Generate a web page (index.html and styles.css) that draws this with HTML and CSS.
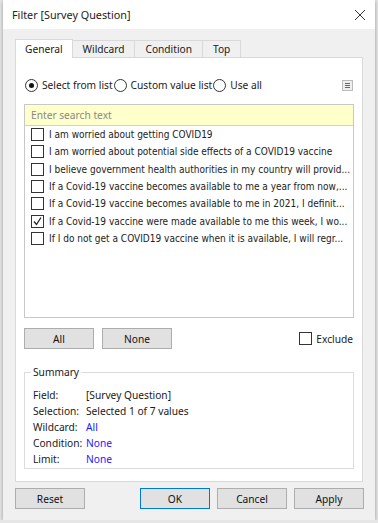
FILE: index.html
```html
<!DOCTYPE html>
<html lang="en">
<head>
  <meta charset="UTF-8">
  <title>Filter [Survey Question]</title>
  <link rel="stylesheet" href="styles.css">
</head>
<body>
  <div class="dialog">
    <div class="title-bar">
      <span class="title">Filter [Survey Question]</span>
      <svg class="close" width="12" height="12" viewBox="0 0 12 12"><path d="M1 1 L11 11 M11 1 L1 11" stroke="#333" stroke-width="1"/></svg>
    </div>
    <div class="body">
      <div class="tabs">
        <div class="tab active">General</div>
        <div class="tab">Wildcard</div>
        <div class="tab">Condition</div>
        <div class="tab">Top</div>
      </div>
      <div class="panel">
        <div class="mode-row">
          <label class="radio"><span class="dot checked"></span>Select from list</label>
          <label class="radio"><span class="dot"></span>Custom value list</label>
          <label class="radio"><span class="dot"></span>Use all</label>
          <span class="menu-icon"><svg width="9" height="9" viewBox="0 0 9 9"><path d="M2 2.5h5M2 4.5h5M2 6.5h5" stroke="#666" stroke-width="1"/></svg></span>
        </div>
        <div class="list-box">
          <div class="search">Enter search text</div>
          <div class="items">
            <div class="item"><span class="box"></span>I am worried about getting COVID19</div>
            <div class="item"><span class="box"></span>I am worried about potential side effects of a COVID19 vaccine</div>
            <div class="item"><span class="box"></span>I believe government health authorities in my country will provid...</div>
            <div class="item"><span class="box"></span>If a Covid-19 vaccine becomes available to me a year from now,...</div>
            <div class="item"><span class="box"></span>If a Covid-19 vaccine becomes available to me in 2021, I definit...</div>
            <div class="item"><span class="box"><svg width="11" height="11" viewBox="0 0 11 11"><path d="M2 5.5 L4.5 8.5 L9 1.5" stroke="#222" stroke-width="1.3" fill="none"/></svg></span>If a Covid-19 vaccine were made available to me this week, I wo...</div>
            <div class="item"><span class="box"></span>If I do not get a COVID19 vaccine when it is available, I will regr...</div>
          </div>
        </div>
        <div class="select-row">
          <button class="btn small">All</button>
          <button class="btn small">None</button>
          <label class="exclude"><span class="box"></span>Exclude</label>
        </div>
        <fieldset class="summary">
          <legend>Summary</legend>
          <div class="sum-row"><span class="key">Field:</span><span>[Survey Question]</span></div>
          <div class="sum-row"><span class="key">Selection:</span><span>Selected 1 of 7 values</span></div>
          <div class="sum-row"><span class="key">Wildcard:</span><span class="link">All</span></div>
          <div class="sum-row"><span class="key">Condition:</span><span class="link">None</span></div>
          <div class="sum-row"><span class="key">Limit:</span><span class="link">None</span></div>
        </fieldset>
      </div>
      <div class="footer">
        <button class="btn">Reset</button>
        <div class="spacer"></div>
        <button class="btn default">OK</button>
        <button class="btn">Cancel</button>
        <button class="btn">Apply</button>
      </div>
    </div>
  </div>
</body>
</html>
```

FILE: styles.css
```css
body {
  margin: 0;
  background-color: #e6e6e6;
  font-family: "Noto Sans", "Liberation Sans", sans-serif;
  font-size: 10.2px;
  color: #1a1a1a;
}

.dialog {
  width: 372px;
  height: 520px;
  margin-left: 3px;
  background-color: #f0f0f0;
  box-shadow: 0 1px 4px rgba(0, 0, 0, 0.35);
  display: flex;
  flex-direction: column;
}

.title-bar {
  height: 29px;
  background-color: white;
  display: flex;
  align-items: center;
  justify-content: space-between;
  padding: 0 9px 0 9px;
}

.title {
  font-size: 10.8px;
  color: #222;
}

.body {
  flex: 1;
  padding: 10px 11px 0 12px;
  display: flex;
  flex-direction: column;
}

.tabs {
  display: flex;
  height: 18px;
  align-items: flex-end;
}

.tab {
  height: 17px;
  line-height: 16px;
  padding: 0 10px;
  border: 1px solid #d9d9d9;
  border-bottom: none;
  box-sizing: border-box;
  text-align: center;
}

.tab + .tab {
  border-left: none;
}

.tab.active {
  height: 19px;
  line-height: 19px;
  background-color: white;
  padding: 0 9px;
  margin-bottom: -1px;
  position: relative;
}

.panel {
  background-color: white;
  border: 1px solid #d9d9d9;
  width: 348px;
  box-sizing: border-box;
  height: 425px;
  padding: 0 8px;
}

.mode-row {
  display: flex;
  align-items: center;
  height: 16px;
  margin-top: 19px;
  padding-left: 1px;
}

.radio {
  display: flex;
  align-items: center;
  gap: 4px;
  margin-right: 1px;
}

.dot {
  width: 11px;
  height: 11px;
  border: 1px solid #333;
  border-radius: 50%;
  display: inline-flex;
  align-items: center;
  justify-content: center;
}

.dot.checked::after {
  content: "";
  width: 5px;
  height: 5px;
  border-radius: 50%;
  background-color: #111;
}

.menu-icon {
  margin-left: auto;
  width: 9px;
  height: 9px;
  border: 1px solid #bbb;
  background-color: #eee;
  margin-right: 1px;
  display: flex;
}

.list-box {
  margin-top: 11px;
  border: 1px solid #c8c8c8;
  height: 214px;
  box-sizing: border-box;
}

.search {
  height: 20px;
  line-height: 20px;
  background-color: #ffffcc;
  border-bottom: 1px solid #d4d4a8;
  padding-left: 6px;
  color: #888;
}

.items {
  font-family: "DejaVu Sans Condensed", "DejaVu Sans", sans-serif;
  font-stretch: condensed;
  font-size: 10px;
}

.item {
  height: 17.3px;
  display: flex;
  align-items: center;
  white-space: nowrap;
  overflow: hidden;
  padding-left: 6px;
  color: #222;
}

.box {
  width: 11px;
  height: 11px;
  border: 1px solid #333;
  margin-right: 5px;
  flex-shrink: 0;
  display: inline-flex;
  align-items: center;
  justify-content: center;
  background-color: white;
}

.select-row {
  display: flex;
  align-items: center;
  margin-top: 10px;
  gap: 8px;
}

.btn {
  font-family: "Noto Sans", "Liberation Sans", sans-serif;
  font-size: 10.2px;
  color: #111;
  background-color: #e1e1e1;
  border: 1px solid #adadad;
  height: 21px;
  width: 70px;
  padding: 0;
}

.btn.default {
  border-color: #0078d7;
}

.exclude {
  margin-left: auto;
  display: flex;
  align-items: center;
  margin-right: 1px;
}

.exclude .box {
  margin-right: 4px;
}

.summary {
  margin: 16px 0 0;
  padding: 8px 8px 3px;
  border: 1px solid #dcdcdc;
  height: 104px;
  box-sizing: border-box;
}

.summary legend {
  padding: 0 2px;
  margin-left: -2px;
}

.sum-row {
  display: flex;
  height: 16px;
  align-items: center;
}

.key {
  width: 53px;
}

.link {
  color: #1a1aff;
}

.footer {
  display: flex;
  gap: 7px;
  margin-top: 6px;
}

.footer .spacer {
  flex: 1;
}
```
